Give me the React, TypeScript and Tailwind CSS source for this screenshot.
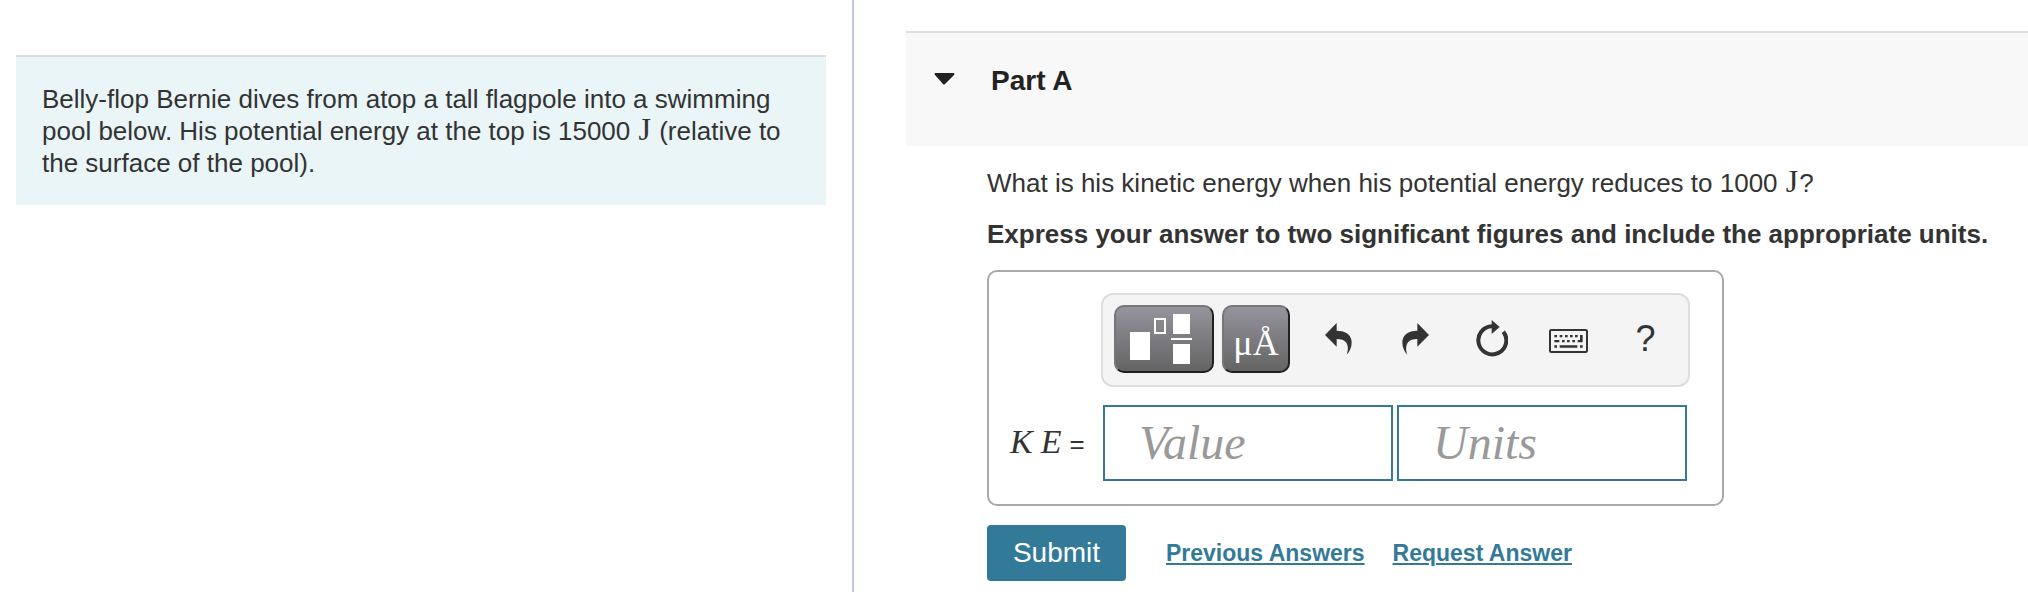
import { useState } from "react";

function Unit({ children }: { children: React.ReactNode }) {
  return <span className="px-px font-['Liberation_Serif',serif] text-[32px] leading-0">{children}</span>;
}

function TemplateIcon() {
  return (
    <svg width="64" height="52" viewBox="0 0 64 52" aria-hidden="true">
      <rect x="1" y="19" width="20" height="28" fill="#fff" />
      <rect x="26" y="6" width="10" height="14" fill="none" stroke="#fff" strokeWidth="2" />
      <rect x="44" y="1" width="17" height="20" fill="#fff" />
      <rect x="42" y="25" width="21" height="2" fill="#fff" />
      <rect x="44" y="31" width="17" height="20" fill="#fff" />
    </svg>
  );
}

function UndoIcon({ flip = false }: { flip?: boolean }) {
  return (
    <svg width="27" height="32" viewBox="0 0 81 96" aria-hidden="true">
      <g transform={flip ? "translate(81 0) scale(-1 1)" : undefined}>
        <path
          d="M0 36 L35 0 V23 C62 23 80 36 80 58 C80 74 74 86 65 95 C70 82 70 68 63 58 C57 50 48 48 35 48 V71 Z"
          fill="#333"
        />
      </g>
    </svg>
  );
}

function ResetIcon() {
  return (
    <svg width="32" height="37" viewBox="0 0 96 111" className="mb-0.5" aria-hidden="true">
      <path d="M82 35 A42 42 0 1 1 48 19" fill="none" stroke="#333" strokeWidth="12" />
      <path d="M47 0 L71 21 L47 42 Z" fill="#333" />
    </svg>
  );
}

function KeyboardIcon() {
  return (
    <svg width="39" height="24" viewBox="0 0 117 72" className="mt-1" fill="#333" aria-hidden="true">
      <rect x="3" y="3" width="111" height="66" rx="4" fill="none" stroke="#333" strokeWidth="6" />
      <path d="M16 18h8v7h-8zM32 18h8v7h-8zM48 18h8v7h-8zM63 18h8v7h-8zM78 18h8v7h-8zM93 18h8v22h-15v-7h7z" />
      <path d="M16 33h15v7h-15zM39 33h8v7h-8zM54 33h8v7h-8zM70 33h8v7h-8z" />
      <path d="M16 49h8v7h-8zM32 49h53v7h-53zM93 49h8v7h-8z" />
    </svg>
  );
}

const tools = [
  { label: "Undo", icon: <UndoIcon /> },
  { label: "Redo", icon: <UndoIcon flip /> },
  { label: "Reset", icon: <ResetIcon /> },
  { label: "Keyboard shortcuts", icon: <KeyboardIcon /> },
  { label: "Help", icon: <span className="text-[36px] leading-none">?</span> },
];

const darkButton =
  "flex h-[68px] items-center justify-center rounded-[10px] border-2 border-t-[#767676] border-l-[#767676] border-r-[#212121] border-b-[#212121] bg-linear-to-b from-[#96949d] to-[#646464] text-white";

const field =
  "h-[76px] min-w-0 flex-1 border-2 border-[#337a99] px-[34px] pb-0.5 font-['Liberation_Serif',serif] text-[48px] outline-none placeholder:italic placeholder:text-[#999]";

export default function App() {
  const [open, setOpen] = useState(true);
  const [value, setValue] = useState("");
  const [units, setUnits] = useState("");

  return (
    <div className="grid min-h-screen grid-cols-[427fr_587fr] bg-white font-['Liberation_Sans',Arial,sans-serif] text-[26px] leading-8 text-[#333]">
      <aside className="min-w-0 border-r-2 border-[#bccadb] pt-[55px] pr-[26px] pl-4">
        <p className="border-t-2 border-[#ddd] bg-[#eaf5f8] pt-[26px] pr-10 pb-[26px] pl-[26px]">
          Belly-flop Bernie dives from atop a tall flagpole into a swimming pool below. His potential energy at the top
          is 15000 <Unit>J</Unit> (relative to the surface of the pool).
        </p>
      </aside>

      <main className="min-w-0 pt-[31px] pl-[52px]">
        <header className="h-[115px] border-t-2 border-[#ddd] bg-[#f8f8f8] pt-8 pl-7">
          <h2 className="text-[28px] font-bold text-[#222]">
            <button type="button" aria-expanded={open} onClick={() => setOpen(!open)} className="flex items-center gap-9">
              <svg width="21" height="12" viewBox="0 0 21 12" className="mb-1" aria-hidden="true">
                <path d="M1 0H20Q21 1 20 2L11 11Q10 12 9 11L1 2Q0 1 1 0Z" fill="#222" />
              </svg>
              Part A
            </button>
          </h2>
        </header>

        {open && (
          <form className="pl-[81px]" onSubmit={e => e.preventDefault()}>
            <p className="mt-[21px]">
              What is his kinetic energy when his potential energy reduces to 1000 <Unit>J</Unit>?
            </p>
            <p className="mt-[19px] font-bold">
              Express your answer to two significant figures and include the appropriate units.
            </p>

            <div className="mt-5 w-full max-w-[737px] rounded-[10px] border-2 border-[#a9a9a9] pt-[21px] pr-[35px] pb-[23px] pl-[21px]">
              <div className="mr-[-3px] ml-[91px] flex h-[94px] items-center gap-2 rounded-xl border-2 border-[#ddd] bg-[#f4f4f4] pr-1 pb-0.5 pl-[11px]">
                <button type="button" aria-label="Templates" className={`${darkButton} w-[100px] pr-1.5`}>
                  <TemplateIcon />
                </button>
                <button
                  type="button"
                  aria-label="Units"
                  className={`${darkButton} w-[68px] pt-2 font-['Liberation_Serif',serif] text-[36px] leading-none`}
                >
                  μÅ
                </button>
                <div className="ml-0.5 flex flex-1">
                  {tools.map(tool => (
                    <button
                      key={tool.label}
                      type="button"
                      aria-label={tool.label}
                      className="flex h-[68px] flex-1 items-center justify-center"
                    >
                      {tool.icon}
                    </button>
                  ))}
                </div>
              </div>

              <div className="mt-[18px] flex items-center">
                <label htmlFor="value" className="flex w-[93px] shrink-0 items-baseline gap-2">
                  <span className="flex gap-2 font-['Liberation_Serif',serif] text-[34px] italic">
                    <span>K</span>
                    <span>E</span>
                  </span>
                  =
                </label>
                <div className="flex min-w-0 flex-1 gap-1">
                  <input
                    id="value"
                    type="text"
                    placeholder="Value"
                    value={value}
                    onChange={e => setValue(e.target.value)}
                    className={field}
                  />
                  <input
                    type="text"
                    aria-label="Units"
                    placeholder="Units"
                    value={units}
                    onChange={e => setUnits(e.target.value)}
                    className={field}
                  />
                </div>
              </div>
            </div>

            <div className="mt-[19px] flex items-center text-[23px] font-bold text-[#337a99]">
              <button type="submit" className="h-14 w-[139px] rounded bg-[#337a99] text-[28px] font-normal text-white">
                Submit
              </button>
              <a href="#previous" className="ml-10 underline decoration-2 underline-offset-2">
                Previous Answers
              </a>
              <a href="#request" className="ml-7 underline decoration-2 underline-offset-2">
                Request Answer
              </a>
            </div>
          </form>
        )}
      </main>
    </div>
  );
}
